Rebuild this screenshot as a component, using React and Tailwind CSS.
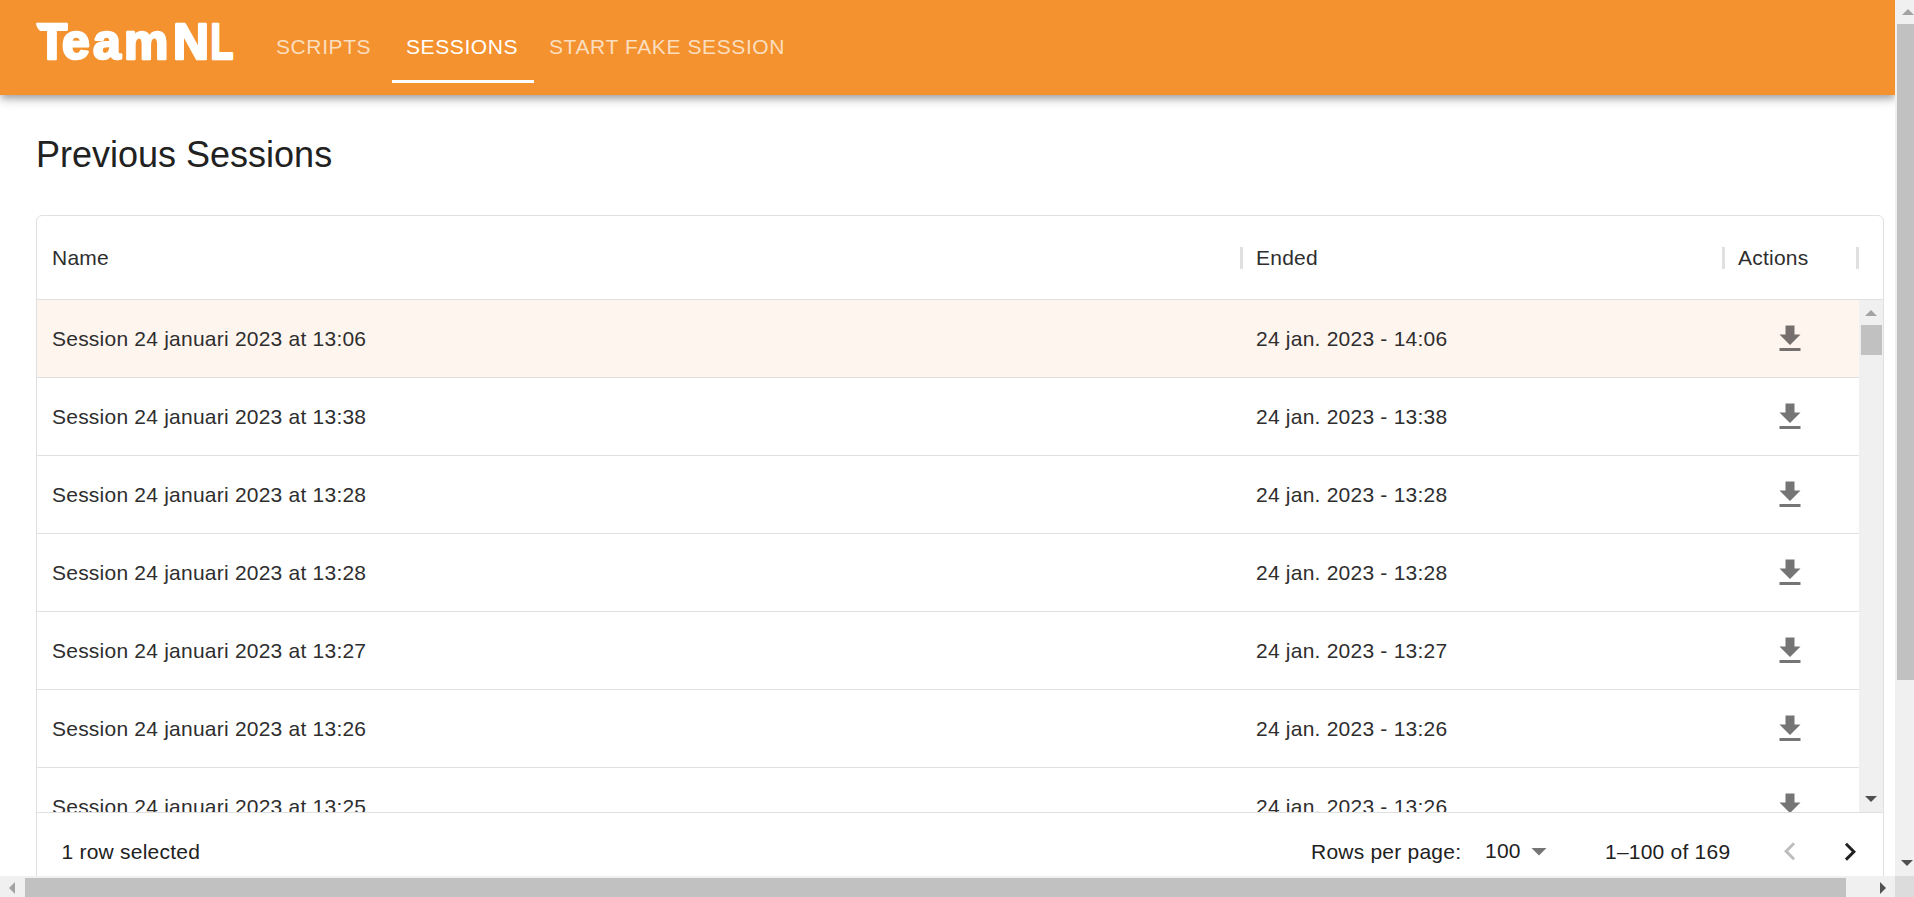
import React from "react";

const rows = [
  ["Session 24 januari 2023 at 13:06", "24 jan. 2023 - 14:06"],
  ["Session 24 januari 2023 at 13:38", "24 jan. 2023 - 13:38"],
  ["Session 24 januari 2023 at 13:28", "24 jan. 2023 - 13:28"],
  ["Session 24 januari 2023 at 13:28", "24 jan. 2023 - 13:28"],
  ["Session 24 januari 2023 at 13:27", "24 jan. 2023 - 13:27"],
  ["Session 24 januari 2023 at 13:26", "24 jan. 2023 - 13:26"],
  ["Session 24 januari 2023 at 13:25", "24 jan. 2023 - 13:26"],
];

function Icon({ d, className }) {
  return (
    <svg viewBox="0 0 24 24" className={"size-9 shrink-0 fill-current " + className}>
      <path d={d} />
    </svg>
  );
}

function Arrow({ points, className }) {
  return (
    <svg viewBox="0 0 12 12" className={"size-3 shrink-0 fill-current " + className}>
      <polygon points={points} />
    </svg>
  );
}

const UP = "0,9 6,3 12,9";
const DOWN = "0,3 12,3 6,9";
const LEFT = "9,0 9,12 3,6";
const RIGHT = "3,0 9,6 3,12";

function Logo() {
  return (
    <svg viewBox="0 0 219 95" className="h-[95px] w-[219px] shrink-0">
      <g
        className="fill-white stroke-white stroke-[2.6px] text-[49.8px] font-bold"
        strokeLinejoin="round"
      >
        <text x="0.8 26 57 88 137" y="59">
          TeamN
        </text>
        <text transform="translate(174.4 59) scale(0.75 1)">L</text>
      </g>
      <path d="M-1 31.5 L6 31.5 Q1.5 30.5 0 24 L-1 24 Z" fill="#f4922f" />
    </svg>
  );
}

function Header() {
  return (
    <header className="relative z-10 flex h-[95px] shrink-0 bg-[#f4922f] pl-9 shadow-[0_3px_6px_-1.5px_rgba(0,0,0,0.2),0_6px_7.5px_0_rgba(0,0,0,0.14),0_1.5px_15px_0_rgba(0,0,0,0.12)]">
      <Logo />
      <nav className="mt-3 flex h-[71px] text-[21px] leading-[69px] tracking-[0.6px] whitespace-nowrap text-[#fbdebf]">
        <a className="w-[137px] pl-[21px]">SCRIPTS</a>
        <a className="w-[142px] border-b-[3px] border-white pl-[14px] text-white">SESSIONS</a>
        <a className="pl-[15px]">START FAKE SESSION</a>
      </nav>
    </header>
  );
}

function Grid() {
  return (
    <div className="mt-[37px] mr-[11px] ml-9 flex h-[720px] shrink-0 flex-col rounded-[6px] border border-[#e0e0e0] text-[21px] tracking-[0.225px] text-[#2e2e2e]">
      <div className="flex h-[84px] shrink-0 items-center border-b border-[#e0e0e0]">
        <div className="flex w-[1204px] items-center justify-between pl-[15px]">
          Name
          <span className="mr-[-2px] h-[22px] w-[3px] bg-[#e0e0e0]" />
        </div>
        <div className="flex w-[482px] items-center justify-between pl-[15px]">
          Ended
          <span className="mr-[-2px] h-[22px] w-[3px] bg-[#e0e0e0]" />
        </div>
        <div className="flex w-[136px] items-center justify-between pl-[15px]">
          Actions
          <span className="h-[22px] w-[3px] bg-[#e0e0e0]" />
        </div>
      </div>
      <div className="flex h-[512px] shrink-0 overflow-hidden">
        <div className="flex w-[1822px] flex-col">
          {rows.map(([name, ended], i) => (
            <div
              key={i}
              className={
                "flex h-[78px] shrink-0 items-center border-b border-[#e0e0e0] " +
                (i === 0 ? "bg-[#fff5ef]" : "")
              }
            >
              <div className="w-[1204px] pl-[15px]">{name}</div>
              <div className="w-[482px] pl-[15px]">{ended}</div>
              <div className="flex w-[136px] pl-[49px]">
                <Icon d="M19 9h-4V3H9v6H5l7 7 7-7zM5 18v2h14v-2H5z" className="text-black/54" />
              </div>
            </div>
          ))}
        </div>
        <div className="flex w-6 flex-col items-center bg-[#f0f0f0]">
          <div className="flex h-[25px] items-center">
            <Arrow points={UP} className="text-[#a3a3a3]" />
          </div>
          <div className="h-[30px] w-[21px] bg-[#c1c1c1]" />
          <div className="mt-auto mb-[7px]">
            <Arrow points={DOWN} className="text-[#505050]" />
          </div>
        </div>
      </div>
      <div className="flex h-[78px] items-center border-t border-[#e0e0e0] text-[#212121]">
        <div className="w-[1249px] pl-[24.5px]">1 row selected</div>
        <div className="-ml-px w-[200px] pl-[26px]">Rows per page:</div>
        <div className="flex w-[120px] items-center pb-[2px]">
          <span className="w-9">100</span>
          <Icon d="M7 10l5 5 5-5z" className="text-black/54" />
        </div>
        <div className="w-[167px]">1–100 of 169</div>
        <Icon
          d="M15.41 16.09l-4.58-4.59 4.58-4.59L14 5.5l-6 6 6 6z"
          className="text-black/26"
        />
        <Icon
          d="M8.59 16.34l4.58-4.59-4.58-4.59L10 5.75l6 6-6 6z"
          className="ml-6 text-[#212121]"
        />
      </div>
    </div>
  );
}

export default function App() {
  return (
    <div className="flex h-[897px] w-[1914px] flex-col overflow-hidden bg-white font-['Liberation_Sans',Arial,sans-serif]">
      <div className="flex h-[876px] shrink-0">
        <div className="flex w-[1895px] shrink-0 flex-col overflow-hidden">
          <Header />
          <h1 className="mt-9 ml-9 h-[47px] shrink-0 text-[36px] leading-[48px] text-[#212121]">
            Previous Sessions
          </h1>
          <Grid />
        </div>
        <div className="flex w-[19px] flex-col overflow-hidden bg-[#f0f0f0] pl-[2px]">
          <div className="flex h-6 shrink-0 items-center pl-[5px]">
            <Arrow points={UP} className="text-[#a3a3a3]" />
          </div>
          <div className="h-[656px] w-[21px] shrink-0 bg-[#c1c1c1]" />
          <div className="mt-auto mb-[7px] pl-1">
            <Arrow points={DOWN} className="text-[#505050]" />
          </div>
        </div>
      </div>
      <div className="flex h-[21px] shrink-0 bg-[#f0f0f0]">
        <div className="flex w-[25px] items-center pt-[3px] pl-[6px]">
          <Arrow points={LEFT} className="text-[#a3a3a3]" />
        </div>
        <div className="mt-[2px] w-[1821px] bg-[#c1c1c1]" />
        <div className="flex w-[49px] items-center justify-end pt-[3px] pr-[6px]">
          <Arrow points={RIGHT} className="text-[#505050]" />
        </div>
        <div className="w-[19px] bg-[#dcdcdc]" />
      </div>
    </div>
  );
}
